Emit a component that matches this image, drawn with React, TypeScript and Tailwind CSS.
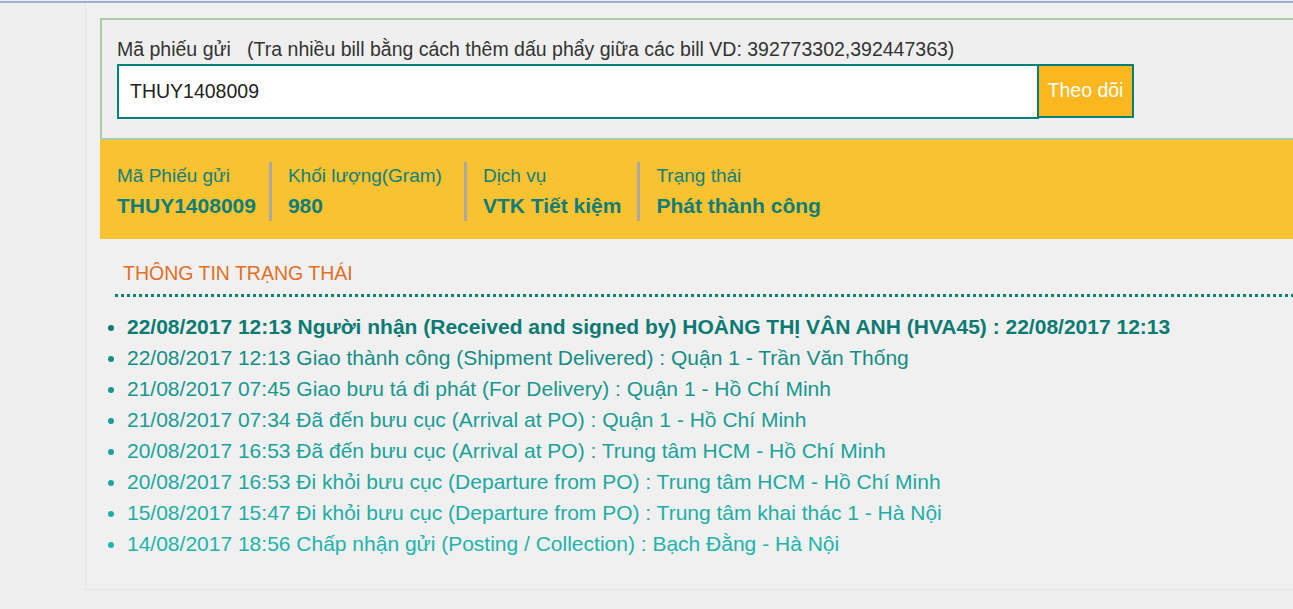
import React from 'react';

const summary = [
  { label: 'Mã Phiếu gửi', value: 'THUY1408009', pad: 'pl-[17px] pr-[13px]' },
  { label: 'Khối lượng(Gram)', value: '980', pad: 'border-l-[3px] border-[#a9a9a9] pl-4 pr-[22px]' },
  { label: 'Dịch vụ', value: 'VTK Tiết kiệm', pad: 'border-l-[3px] border-[#a9a9a9] pl-4 pr-4' },
  { label: 'Trạng thái', value: 'Phát thành công', pad: 'border-l-[3px] border-[#a9a9a9] pl-4 pr-4' },
];

const events = [
  { text: '22/08/2017 12:13 Người nhận (Received and signed by) HOÀNG THỊ VÂN ANH (HVA45) : 22/08/2017 12:13', color: 'text-[#0b7a73] font-bold' },
  { text: '22/08/2017 12:13 Giao thành công (Shipment Delivered) : Quận 1 - Trần Văn Thống', color: 'text-[#138d86]' },
  { text: '21/08/2017 07:45 Giao bưu tá đi phát (For Delivery) : Quận 1 - Hồ Chí Minh', color: 'text-[#17978f]' },
  { text: '21/08/2017 07:34 Đã đến bưu cục (Arrival at PO) : Quận 1 - Hồ Chí Minh', color: 'text-[#199d95]' },
  { text: '20/08/2017 16:53 Đã đến bưu cục (Arrival at PO) : Trung tâm HCM - Hồ Chí Minh', color: 'text-[#1aa39b]' },
  { text: '20/08/2017 16:53 Đi khỏi bưu cục (Departure from PO) : Trung tâm HCM - Hồ Chí Minh', color: 'text-[#1ca8a0]' },
  { text: '15/08/2017 15:47 Đi khỏi bưu cục (Departure from PO) : Trung tâm khai thác 1 - Hà Nội', color: 'text-[#1eaea5]' },
  { text: '14/08/2017 18:56 Chấp nhận gửi (Posting / Collection) : Bạch Đằng - Hà Nội', color: 'text-[#20b4aa]' },
];

const App: React.FC = () => {
  return (
    <div className="min-h-screen w-[1293px] overflow-hidden bg-[#efefef] font-['Liberation_Sans',Arial,sans-serif]">
      <div className="h-px bg-[#e9edf2]" />
      <div className="h-[2px] bg-[#9bb3cf]" />

      {/* Tracking panel */}
      <div className="ml-[85px] w-[1300px] border-l border-b border-[#e4e4e4] bg-[#f0f0f0] pl-[14px] pt-[15px] pb-[30px]">
        {/* Search box */}
        <div className="border-2 border-r-0 border-[#a9cea9] bg-[#efefef] pl-[15px] pt-[19px] pb-[19px]">
          <label className="block text-[19.5px] leading-[20px] text-[#333]">
            Mã phiếu gửi&nbsp;&nbsp;&nbsp;(Tra nhiều bill bằng cách thêm dấu phẩy giữa các bill VD: 392773302,392447363)
          </label>
          <div className="mt-[5px] flex">
            <input
              defaultValue="THUY1408009"
              className="h-[55px] w-[922px] border-2 border-[#00807a] bg-white pl-[11px] text-[19.5px] text-[#222] outline-none"
            />
            <button className="h-[54px] w-[95px] border-2 border-l-0 border-[#00807a] bg-[#fbb720] text-[19.5px] text-white">
              Theo dõi
            </button>
          </div>
        </div>

        {/* Summary band */}
        <div className="flex h-[99px] bg-[#f8c231] pt-[22px]">
          {summary.map((item) => (
            <div key={item.label} className={`h-[59px] ${item.pad}`}>
              <div className="text-[19px] leading-[28px] text-[#13807b]">{item.label}</div>
              <div className="text-[21px] font-bold leading-[32px] text-[#0e7d78]">{item.value}</div>
            </div>
          ))}
        </div>

        {/* Status history */}
        <div className="ml-[15px] pt-[22px]">
          <h3 className="pl-2 text-[19.5px] leading-[24px] text-[#e07026]">THÔNG TIN TRẠNG THÁI</h3>
          <div className="mt-[9px] h-[3px] bg-[linear-gradient(to_right,#0b807a_50%,transparent_50%)] bg-[length:6px_3px] bg-repeat-x" />
          <ul className="mt-[14px] list-disc pl-[12px] text-[21px] leading-[31px]">
            {events.map((e) => (
              <li key={e.text} className={e.color}>
                {e.text}
              </li>
            ))}
          </ul>
        </div>
      </div>
    </div>
  );
};

export default App;
